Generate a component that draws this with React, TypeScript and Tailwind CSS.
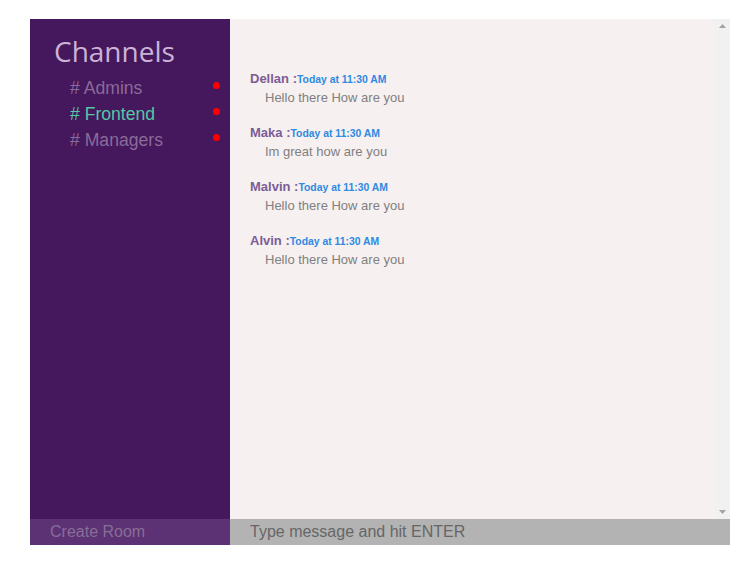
const channels = [
  { name: "Admins", active: false },
  { name: "Frontend", active: true },
  { name: "Managers", active: false },
];

const messages = [
  { user: "Dellan", text: "Hello there How are you" },
  { user: "Maka", text: "Im great how are you" },
  { user: "Malvin", text: "Hello there How are you" },
  { user: "Alvin", text: "Hello there How are you" },
];

export default function App() {
  return (
    <div className="min-h-[561px] bg-white pt-[19px] font-['Liberation_Sans',Arial,sans-serif]">
      <div className="ml-[30px] w-[700px]">
        <div className="flex h-[500px]">
          <div className="w-[200px] bg-[#45175d] pt-[14px]">
            <h1 className="pl-[24px] font-['Open_Sans',sans-serif] text-[28px] leading-[36px] text-[#cbb3d6]">
              Channels
            </h1>
            <ul className="mt-[6px] pl-[40px] pr-[10px]">
              {channels.map((c) => (
                <li key={c.name} className="flex h-[26px] items-center justify-between">
                  <span className={"text-[17.6px] " + (c.active ? "text-[#52c9a3]" : "text-[#8a6b98]")}>
                    # {c.name}
                  </span>
                  <span className="mb-[6px] h-[7px] w-[7px] rounded-full bg-[#ff0000]" />
                </li>
              ))}
            </ul>
          </div>
          <div className="flex-1 bg-[#f7f0f0] pl-[20px] pt-[50px]">
            {messages.map((m) => (
              <div key={m.user} className="mb-[16px]">
                <div className="h-[19px] leading-[17px]">
                  <span className="text-[13px] font-bold text-[#7b5d96]">{m.user} :</span>
                  <span className="text-[10.4px] font-bold text-[#2e8ae2]">Today at 11:30 AM</span>
                </div>
                <p className="pl-[15px] text-[13px] leading-[19px] text-[#808080]">{m.text}</p>
              </div>
            ))}
          </div>
          <div className="flex w-[15px] flex-col items-center justify-between bg-[#f1f1f1] py-[5px]">
            <svg width="7" height="4" viewBox="0 0 7 4">
              <path d="M0 4 L3.5 0 L7 4 Z" fill="#a3a3a3" />
            </svg>
            <svg width="7" height="4" viewBox="0 0 7 4">
              <path d="M0 0 L7 0 L3.5 4 Z" fill="#a3a3a3" />
            </svg>
          </div>
        </div>
        <div className="flex h-[26px]">
          <button className="w-[200px] bg-[#5c3274] pl-[20px] text-left text-[16px] text-[#866e96]">
            Create Room
          </button>
          <input
            className="flex-1 bg-[#b3b3b3] pl-[20px] text-[16px] outline-none placeholder:text-[#666666]"
            placeholder="Type message and hit ENTER"
          />
        </div>
      </div>
    </div>
  );
}
